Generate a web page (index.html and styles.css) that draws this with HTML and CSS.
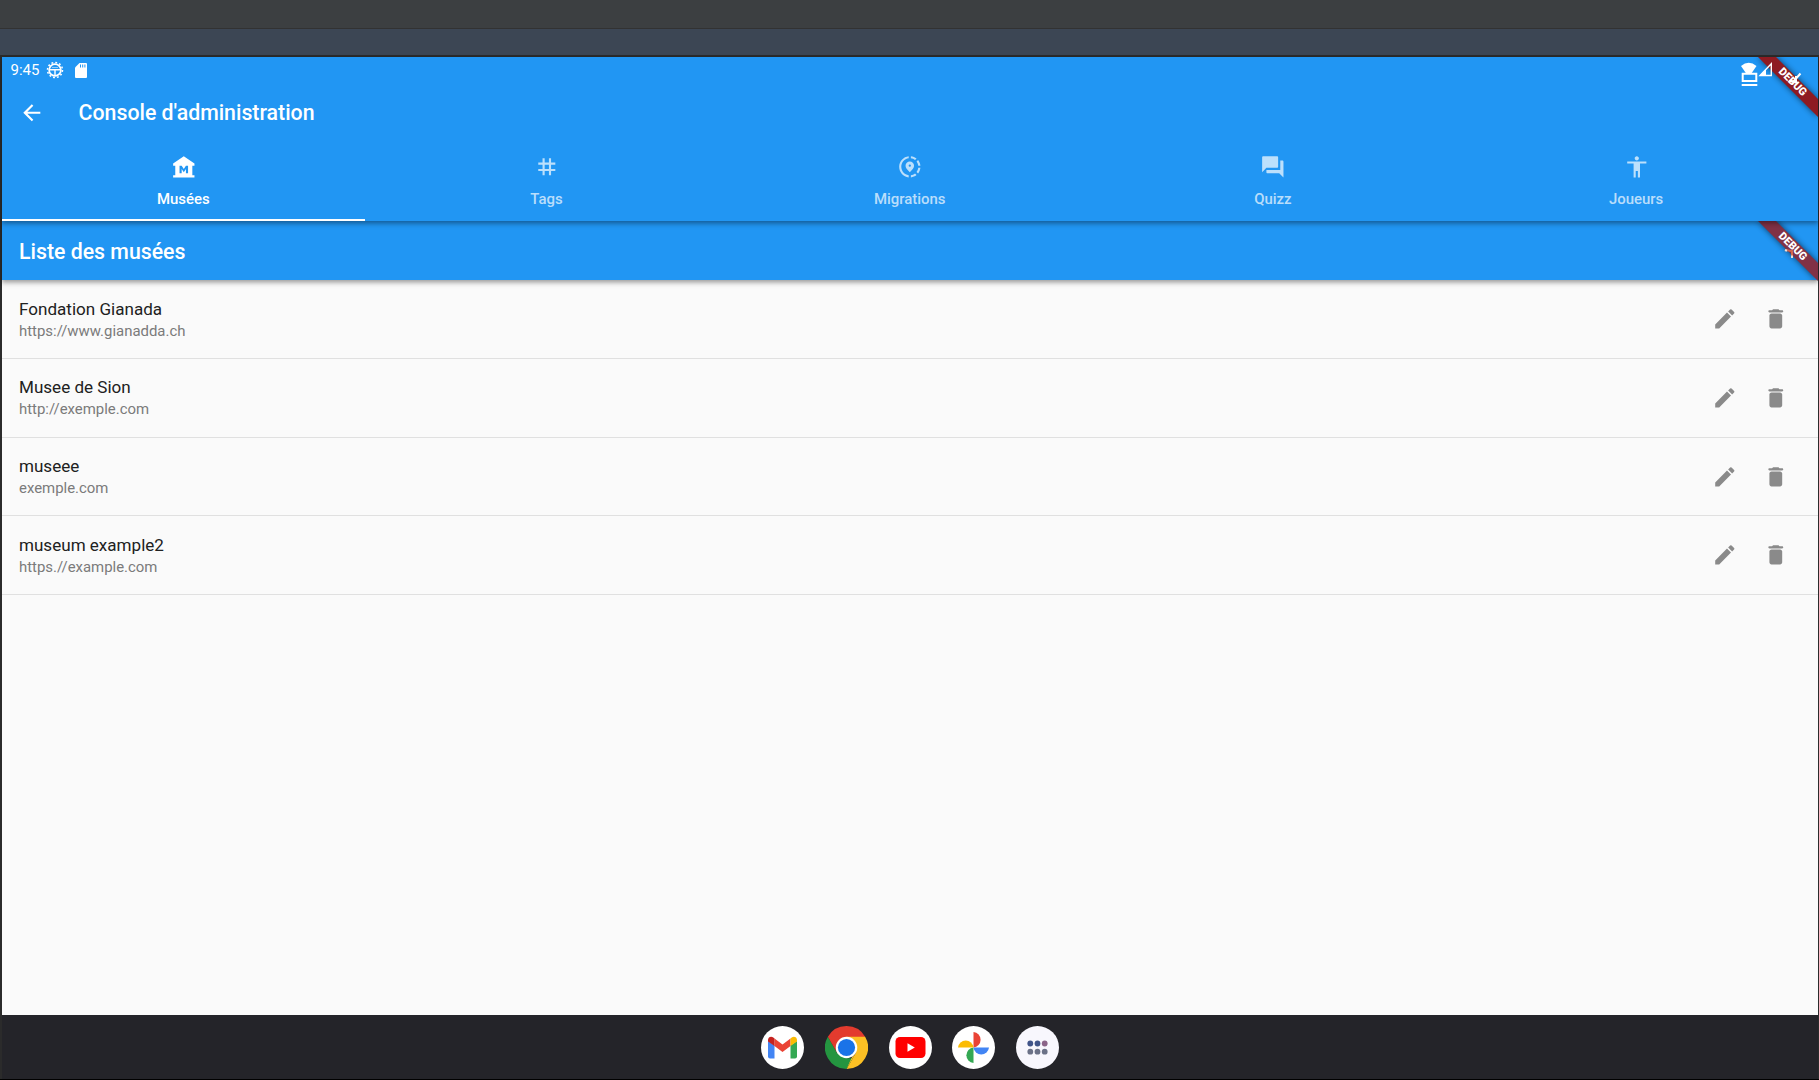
FILE: index.html
```html
<!DOCTYPE html>
<html lang="fr">
<head>
<meta charset="utf-8">
<title>Console d'administration</title>
<link rel="stylesheet" href="styles.css">
</head>
<body>
<svg width="0" height="0" class="defs">
  <defs>
    <symbol id="edit" viewBox="0 0 24 24"><path d="M3 17.25V21h3.75L17.81 9.94l-3.75-3.75L3 17.25zM20.71 7.04a1 1 0 0 0 0-1.41l-2.34-2.34a1 1 0 0 0-1.41 0l-1.83 1.83 3.75 3.75 1.83-1.83z"/></symbol>
    <symbol id="delete" viewBox="0 0 24 24"><path d="M6 19c0 1.100.9 2 2 2h8c1.100 0 2-.9 2-2V9c0-1.100-.9-2-2-2H8c-1.100 0-2 .9-2 2v10zM18 4h-2.500l-.71-.71c-.18-.18-.44-.29-.7-.29H9.910c-.26 0-.52.11-.7.29L8.500 4H6c-.55 0-1 .45-1 1s.45 1 1 1h12c.55 0 1-.45 1-1s-.45-1-1-1z"/></symbol>
  </defs>
</svg>
<div class="toolbar"></div>
<div class="window-title"></div>
<div class="device">
  <header class="appbar">
    <div class="status">
      <span class="clock">9:45</span>
      <svg class="gear" width="18" height="18" viewBox="0 0 18 18" fill="none" stroke="#fff"><circle cx="9" cy="9" r="5.900" stroke-width="1.700"/><circle cx="9" cy="9" r="7.500" stroke-width="1.500" stroke-dasharray="1.900 2.030"/><path d="M4 8.700h10M9 8.700v6" stroke-width="1.400"/><path d="M6 6.500h6" stroke-width="1" opacity=".5"/></svg>
      <svg class="sd" width="12" height="15" viewBox="0 0 12 15"><path fill="#fff" d="M4.500 0H11a1 1 0 0 1 1 1v13a1 1 0 0 1-1 1H1a1 1 0 0 1-1-1V4.500z"/><path stroke="#2196f3" stroke-width="1" d="M5.500 1.500v3M7.700 1.500v3M9.900 1.500v3"/></svg>
    </div>
    <div class="title-row">
      <svg class="back" width="25.600" height="25.600" viewBox="0 0 24 24" fill="#fff"><path d="M20 11H7.830l5.590-5.590L12 4l-8 8 8 8 1.410-1.410L7.830 13H20v-2z"/></svg>
      <h1>Console d'administration</h1>
    </div>
    <nav class="tabs">
      <div class="tab active"><svg viewBox="0 0 24 24"><path fill-rule="evenodd" d="M22 11V9L12 2 2 9v2h2v9H2v2h20v-2h-2v-9h2zM16 18h-2v-4l-2 3-2-3v4H8v-7h2l2 3 2-3h2v7z"/></svg><span>Musées</span></div>
      <div class="tab"><svg viewBox="0 0 24 24"><path d="M20 10V8h-4V4h-2v4h-4V4H8v4H4v2h4v4H4v2h4v4h2v-4h4v4h2v-4h4v-2h-4v-4h4zm-6 4h-4v-4h4v4z"/></svg><span>Tags</span></div>
      <div class="tab"><svg viewBox="0 0 24 24"><path d="M13.020 19.930v2.020c2.010-.2 3.840-1 5.320-2.210l-1.420-1.430c-1.110.86-2.440 1.440-3.900 1.620zM4.030 12c0-4.050 3.030-7.410 6.950-7.930V2.050C5.950 2.580 2.030 6.840 2.030 12s3.920 9.420 8.950 9.950v-2.020c-3.920-.52-6.950-3.880-6.950-7.930zM19.950 11h2.020c-.2-2.010-1-3.840-2.210-5.320l-1.430 1.430c.86 1.100 1.440 2.430 1.620 3.890zM18.340 4.260c-1.480-1.210-3.320-2.010-5.320-2.210v2.020c1.460.18 2.790.76 3.900 1.620l1.420-1.430zM18.330 16.900l1.430 1.420c1.210-1.480 2.010-3.310 2.210-5.320h-2.020c-.18 1.460-.76 2.790-1.620 3.900zM16 11.100C16 8.610 14.100 7 12 7s-4 1.610-4 4.100c0 1.660 1.330 3.630 4 5.900 2.670-2.270 4-4.240 4-5.900zm-4 .9a1.070 1.070 0 1 1 0-2.140A1.070 1.070 0 0 1 12 12z"/></svg><span>Migrations</span></div>
      <div class="tab"><svg viewBox="0 0 24 24"><path d="M21 6h-2v9H6v2c0 .55.45 1 1 1h11l4 4V7c0-.55-.45-1-1-1zm-4 6V3c0-.55-.45-1-1-1H3c-.55 0-1 .45-1 1v14l4-4h10c.55 0 1-.45 1-1z"/></svg><span>Quizz</span></div>
      <div class="tab"><svg viewBox="0 0 24 24"><path d="M12 2c1.100 0 2 .9 2 2s-.9 2-2 2-2-.9-2-2 .9-2 2-2zm9 7h-6v13h-2v-6h-2v6H9V9H3V7h18v2z"/></svg><span>Joueurs</span></div>
    </nav>
    <svg class="corner" width="80" height="80" viewBox="0 0 80 80">
      <defs><filter id="soft" x="-30%" y="-30%" width="160%" height="160%"><feGaussianBlur stdDeviation="3.200"/></filter></defs>
      <path d="M20 0h18l42 42v18z" fill="#000" opacity=".6" filter="url(#soft)"/>
      <path d="M20 0h18l42 42v18z" fill="#8e1b22"/>
      <path d="M3 9Q10.700 2.500 18.500 9L13 17H8.500z" fill="#fff"/>
      <path d="M4.700 16.700h13.600v7.300H4.700zM3.700 28h15.600" fill="none" stroke="#fff" stroke-width="2"/>
      <path d="M22 18.500 33.300 6.800v11.700z" fill="none" stroke="#fff" stroke-width="1.400"/><path d="M22 18.500 28 12.300v6.200z" fill="#fff"/>
      <path d="m62.500 16.500-8 9M58 19v6M51 24l5 1 4 1" stroke="#fff" stroke-width="2" fill="none"/>
      <text class="debug" transform="translate(55 24.500) rotate(45)" y="3.900">DEBUG</text>
    </svg>
  </header>
  <section class="subbar">
    <h2>Liste des musées</h2>
    <svg class="corner" width="80" height="60" viewBox="0 0 80 60">
      <path d="M20 0h18l42 42v18z" fill="#000" opacity=".6" filter="url(#soft)"/>
      <path d="M20 0h18l42 42v18z" fill="#813146"/>
      <path d="m47 29 7 1v6" stroke="#d4674e" stroke-width="2" fill="none"/><path d="m47 29 2 .8M54 34.500V37" stroke="#e8dedc" stroke-width="2"/>
      <text class="debug" transform="translate(55.200 25) rotate(45)" y="3.900">DEBUG</text>
    </svg>
  </section>
  <main class="list">
    <div class="row"><div class="text"><b>Fondation Gianada</b><span>https://www.gianadda.ch</span></div><svg><use href="#edit"/></svg><svg><use href="#delete"/></svg></div>
    <div class="row"><div class="text"><b>Musee de Sion</b><span>http://exemple.com</span></div><svg><use href="#edit"/></svg><svg><use href="#delete"/></svg></div>
    <div class="row"><div class="text"><b>museee</b><span>exemple.com</span></div><svg><use href="#edit"/></svg><svg><use href="#delete"/></svg></div>
    <div class="row"><div class="text"><b>museum example2</b><span>https.//example.com</span></div><svg><use href="#edit"/></svg><svg><use href="#delete"/></svg></div>
  </main>
  <footer class="dock">
    <svg viewBox="0 0 43 43"><circle cx="21.500" cy="21.500" r="21.500" fill="#fff"/><path fill="#4285f4" d="M7 15l6.500 4.500V32.500H9a2 2 0 0 1-2-2z"/><path fill="#34a853" d="M36 15l-6.500 4.500V32.500H34a2 2 0 0 0 2-2z"/><path fill="#ea4335" d="M13.500 12.500l8 6 8-6v7.500l-8 6-8-6z"/><path fill="#c5221f" d="M7 14c0-3 3.200-4.200 5.300-2.500l1.200 1V20L7 15.500z"/><path fill="#fbbc04" d="M36 14c0-3-3.200-4.200-5.300-2.500l-1.200 1V20l6.500-4.500z"/></svg>
    <svg viewBox="0 0 43 43"><path fill="#e33b2e" d="M21.500 21.500 2.880 10.750A21.500 21.500 0 0 1 40.120 10.750z"/><path fill="#fcc024" d="M21.500 10.750H40.120A21.500 21.500 0 0 1 21.500 43L30.800 26.900z"/><path fill="#249540" d="M2.880 10.750 12.200 26.900 21.500 32.250H27.700L21.500 43A21.500 21.500 0 0 1 2.880 10.750z"/><path fill="#e33b2e" d="M2.880 10.750H21.500v10.750l-9.300 5.400z"/><path fill="#fcc024" d="M30.800 26.900 21.500 43 27 31z"/><circle cx="21.500" cy="21.500" r="10.750" fill="#fff"/><circle cx="21.500" cy="21.500" r="8.600" fill="#1a73e8"/></svg>
    <svg viewBox="0 0 43 43"><circle cx="21.500" cy="21.500" r="21.500" fill="#fff"/><rect x="6.500" y="11" width="30" height="21" rx="4.500" fill="#f00"/><path fill="#fff" d="M18.500 17.300v8.400l7.300-4.200z"/></svg>
    <svg viewBox="0 0 43 43"><circle cx="21.500" cy="21.500" r="21.500" fill="#fff"/><path fill="#ea4335" d="M21.500 6a8 7.800 0 0 1 0 15.500z"/><path fill="#4285f4" d="M37 21.500a7.800 8 0 0 1-15.500 0z"/><path fill="#34a853" d="M21.500 37a8 7.800 0 0 1 0-15.500z"/><path fill="#fbbc04" d="M6 21.500a7.800 8 0 0 1 15.500 0z"/></svg>
    <svg viewBox="0 0 43 43"><circle cx="21.500" cy="21.500" r="21.500" fill="#f8f7fd"/><g fill="#405489"><circle cx="14.300" cy="17.500" r="2.900"/><circle cx="21.500" cy="17.500" r="2.900"/></g><circle cx="28.700" cy="17.500" r="2.900" fill="#8b6488"/><g fill="#6b7187"><circle cx="14.300" cy="25.700" r="2.900"/><circle cx="21.500" cy="25.700" r="2.900"/><circle cx="28.700" cy="25.700" r="2.900"/></g></svg>
  </footer>
</div>
</body>
</html>
```
FILE: styles.css
```css
* { box-sizing: border-box; }
body {
  margin: 0;
  width: 1819px;
  height: 1080px;
  display: flex;
  flex-direction: column;
  overflow: hidden;
  background: #000;
  font-family: Roboto, sans-serif;
}
.defs { position: absolute; }
.toolbar { height: 29px; background: #3c3f41; border-bottom: 1px solid #323232; }
.window-title { height: 26px; background: #3c4654; }
.device {
  height: 1024px;
  display: flex;
  flex-direction: column;
  border: solid #2b2b2b;
  border-width: 2px 1px 0 2px;
  background: #fafafa;
}
.appbar {
  position: relative;
  z-index: 2;
  height: 164px;
  display: flex;
  flex-direction: column;
  background: #2196f3;
  color: #fff;
  box-shadow: 0 2px 4px rgba(0, 0, 0, .28), 0 4px 5px rgba(0, 0, 0, .12);
}
.status { height: 26px; display: flex; align-items: center; padding-left: 8.500px; }
.clock { width: 35.500px; font-size: 15px; line-height: 26px; }
.gear { margin-right: 11px; }
.title-row { height: 60px; display: flex; align-items: center; padding-left: 17px; }
.back { margin-right: 34px; }
h1, h2 { margin: 0; font-size: 21.300px; font-weight: 500; line-height: 26px; }
h2 { padding-top: 2.600px; }
.tabs { flex: 1; display: flex; }
.tab {
  flex: 1;
  display: flex;
  flex-direction: column;
  align-items: center;
  padding-top: 11px;
  border-bottom: 2px solid transparent;
  color: rgba(255, 255, 255, .7);
  font-size: 14.930px;
  font-weight: 500;
}
.tab.active { color: #fff; border-color: #fff; }
.tab svg { width: 25.600px; height: 25.600px; fill: currentColor; }
.tab span { margin: 9px .6px 0 0; line-height: 20px; }
.corner { position: absolute; top: 0; right: 0; overflow: hidden; }
.debug { fill: #fff; font-size: 10.900px; font-weight: 900; text-anchor: middle; }
.subbar {
  position: relative;
  z-index: 1;
  height: 59.400px;
  display: flex;
  align-items: center;
  padding-left: 17px;
  background: #2196f3;
  color: #fff;
  box-shadow: 0 2px 4px rgba(0, 0, 0, .28), 0 4px 5px rgba(0, 0, 0, .12);
}
.list { flex: 1; }
.row {
  height: 78.600px;
  display: flex;
  align-items: center;
  padding: 0 29.700px 0 17px;
  border-bottom: 1px solid #e0e0e0;
}
.text { flex: 1; display: flex; flex-direction: column; padding-top: 1.400px; }
.text b { font-size: 17.070px; font-weight: 400; line-height: 22px; color: #212121; }
.text span { font-size: 14.930px; line-height: 22px; color: #7b7b7b; }
.row svg { width: 25.600px; height: 25.600px; margin-left: 25.600px; fill: #8a8a8a; }
.dock {
  height: 64px;
  display: flex;
  justify-content: center;
  align-items: center;
  gap: 20.800px;
  padding: 0;
  background: #242429;
}
.dock svg { width: 43px; height: 43px; }
```
